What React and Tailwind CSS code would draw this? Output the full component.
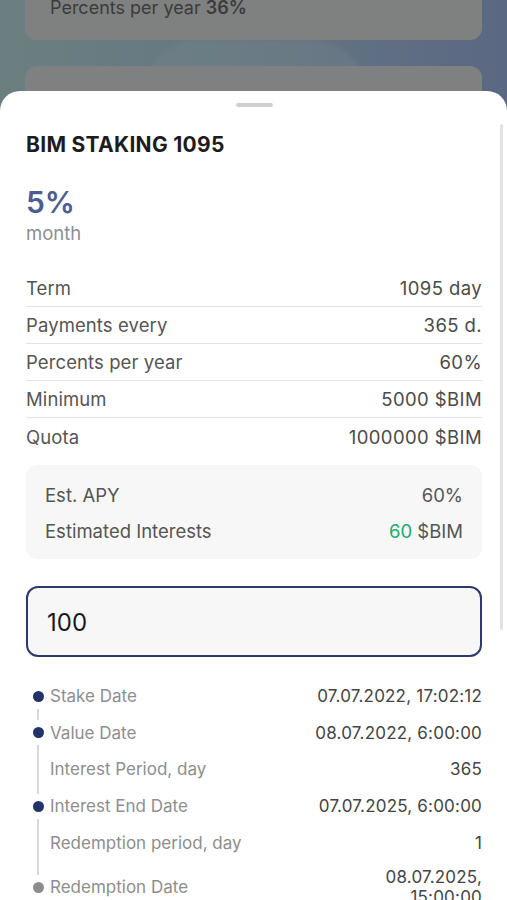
import React from 'react';

const font = { fontFamily: 'Inter, "Noto Sans", sans-serif' };

const terms = [
  ['Term', '1095 day'],
  ['Payments every', '365 d.'],
  ['Percents per year', '60%'],
  ['Minimum', '5000 $BIM'],
  ['Quota', '1000000 $BIM'],
];

const Rail = ({ top, bottom, full, grey }) => {
  if (full) {
    return (
      <div className="w-6 h-full flex justify-center">
        <div className="w-[1.5px] h-full bg-[#d9d9d9]" />
      </div>
    );
  }
  return (
    <div className="w-6 h-full flex flex-col items-center">
      <div className={`w-[1.5px] flex-1 ${top ? 'bg-[#d9d9d9]' : ''}`} />
      <div className={`w-[11px] h-[11px] rounded-full my-[7px] ${grey ? 'bg-[#8c8c8c]' : 'bg-[#22336a]'}`} />
      <div className={`w-[1.5px] flex-1 ${bottom ? 'bg-[#d9d9d9]' : ''}`} />
    </div>
  );
};

const TimelineRow = ({ label, value, rail }) => (
  <div className="flex items-center h-[36.6px]">
    {rail}
    <div className="flex-1 flex justify-between items-center text-[17px] leading-5">
      <span className="text-[#8e8e8e]">{label}</span>
      <span className="text-[#444] tracking-[0.2px]">{value}</span>
    </div>
  </div>
);

export default function App() {
  return (
    <div
      style={font}
      className="relative w-full h-[900px] overflow-hidden bg-gradient-to-r from-[#6b7f80] via-[#657683] to-[#5a6883]"
    >
      {/* dimmed page behind the sheet */}
      <div className="relative h-[91px] overflow-hidden px-[25px]">
        <div className="absolute left-[140px] top-[40px] w-[230px] h-[120px] rounded-full bg-[#7a8b8c]/25 blur-[2px]" />
        <div className="relative h-[40px] flex items-end pb-[20px] px-[25px] rounded-b-[12px] bg-[#7f8080]">
          <span className="text-[18px] leading-6 text-[#3b3b3b]">
            Percents per year <span className="font-semibold">36%</span>
          </span>
        </div>
        <div className="relative mt-[26px] h-[60px] rounded-[12px] bg-[#7e8081]" />
      </div>

      {/* bottom sheet */}
      <div className="relative bg-white rounded-t-[20px] h-[820px] pl-[26px] pr-[25px]">
        <div className="absolute right-[4px] top-[33px] w-[3px] h-[506px] rounded-full bg-[#e2e2e2]" />
        <div className="flex justify-center pt-[12px]">
          <div className="w-[37px] h-[4px] rounded-full bg-[#d0d0d0]" />
        </div>

        <div className="mt-[26px] text-[21px] leading-6 font-bold tracking-[0.3px] text-[#1c1c1c]">
          BIM STAKING 1095
        </div>

        <div className="mt-[27px] text-[30px] leading-9 font-semibold text-[#4d5d8c]">5%</div>
        <div className="mt-[3px] text-[18.5px] leading-5 text-[#8e8e8e]">month</div>

        <div className="mt-[27px]">
          {terms.map(([k, v], i) => (
            <div
              key={k}
              className={`flex justify-between items-center h-[37px] text-[18.5px] leading-[22px] tracking-[0.1px] ${
                i < terms.length - 1 ? 'border-b border-[#e3e3e3]' : ''
              }`}
            >
              <span className="text-[#555]">{k}</span>
              <span className="text-[#4a4a4a] tracking-[0.4px]">{v}</span>
            </div>
          ))}
        </div>

        <div className="mt-[10px] h-[94px] rounded-[12px] bg-[#f7f7f7] px-[19px] pt-[20px] flex flex-col gap-[16px] text-[18.5px] leading-5 text-[#555]">
          <div className="flex justify-between">
            <span>Est. APY</span>
            <span>60%</span>
          </div>
          <div className="flex justify-between">
            <span>Estimated Interests</span>
            <span>
              <span className="text-[#1fa86f]">60</span> $BIM
            </span>
          </div>
        </div>

        <div className="mt-[27px] h-[71px] rounded-[12px] border-2 border-[#2b3a6b] bg-[#f7f7f8] flex items-center px-[19px] pt-[2px] text-[24px] text-[#1a1a1a]">
          100
        </div>

        <div className="mt-[21px]">
          <TimelineRow label="Stake Date" value="07.07.2022, 17:02:12" rail={<Rail bottom />} />
          <TimelineRow label="Value Date" value="08.07.2022, 6:00:00" rail={<Rail top bottom />} />
          <TimelineRow label="Interest Period, day" value="365" rail={<Rail full />} />
          <TimelineRow label="Interest End Date" value="07.07.2025, 6:00:00" rail={<Rail top bottom />} />
          <TimelineRow label="Redemption period, day" value="1" rail={<Rail full />} />
          <div className="flex items-center h-[53px]">
            <Rail top grey />
            <div className="flex-1 flex justify-between items-center text-[17px] leading-5">
              <span className="text-[#8e8e8e]">Redemption Date</span>
              <span className="text-[#444] text-right w-[100px] tracking-[0.2px]">08.07.2025, 15:00:00</span>
            </div>
          </div>
        </div>
      </div>
    </div>
  );
}
